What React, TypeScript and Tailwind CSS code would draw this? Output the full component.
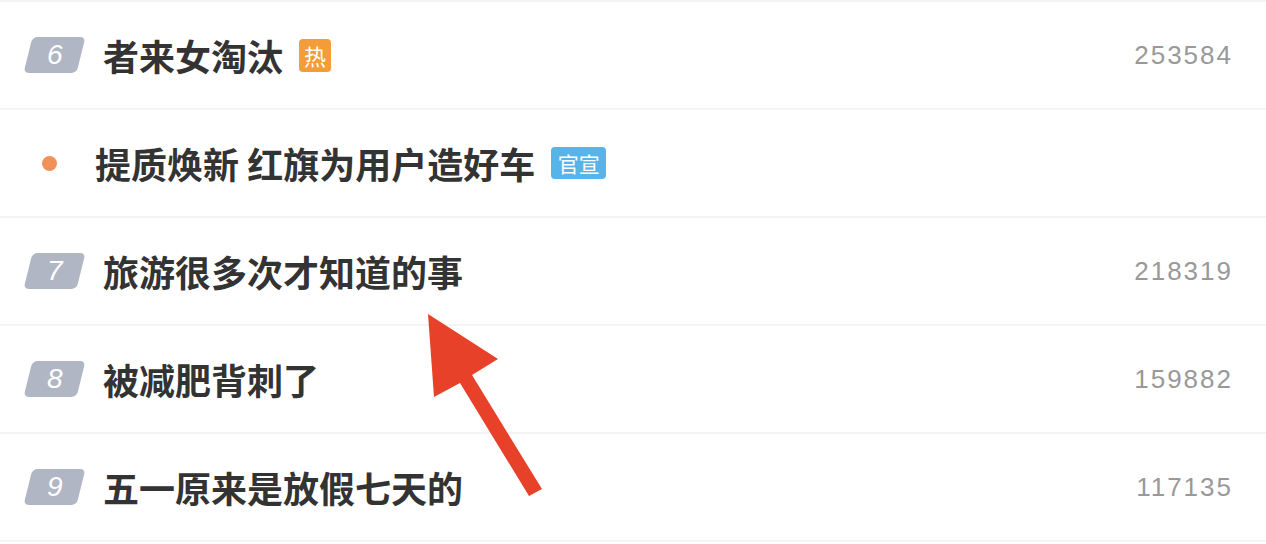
const items = [
    { rank: "6", title: "者来女淘汰", tag: "热", count: "253584" },
    { rank: "", title: "提质焕新 红旗为用户造好车", tag: "官宣", count: "" },
    { rank: "7", title: "旅游很多次才知道的事", tag: "", count: "218319" },
    { rank: "8", title: "被减肥背刺了", tag: "", count: "159882" },
    { rank: "9", title: "五一原来是放假七天的", tag: "", count: "117135" },
];

const cjk = { fontFamily: '"Noto Sans CJK SC", "Noto Sans", sans-serif' };

export default function App() {
    return (
        <div className="relative w-[1266px] h-[544px] bg-white overflow-hidden">
            <div className="border-t-2 border-[#f4f4f4]">
                {items.map((item) => (
                    <div
                        key={item.title}
                        className="flex items-center h-[108px] border-b-2 border-[#f4f4f4] pr-[33px]"
                    >
                        {item.rank ? (
                            <div className="flex items-center pl-[28px] pr-[22px]">
                                <div className="w-[53px] h-[36px] -skew-x-[14deg] rounded-[5px] bg-[#b1b6c5] flex items-center justify-center">
                                    <span
                                        className="text-white text-[28px] italic skew-x-[14deg] leading-none"
                                        style={{ fontFamily: '"Liberation Sans", Arial, sans-serif' }}
                                    >
                                        {item.rank}
                                    </span>
                                </div>
                            </div>
                        ) : (
                            <div className="flex items-center pl-[42px] pr-[38px]">
                                <div className="w-[15px] h-[15px] rounded-full bg-[#f0915a]" />
                            </div>
                        )}
                        <div className="flex items-center gap-[16px] flex-1 min-w-0" style={cjk}>
                            <span className="text-[36px] font-semibold text-[#333333] leading-none">
                                {item.title}
                            </span>
                            {item.tag === "热" && (
                                <span className="w-[32px] h-[33px] rounded-[4px] bg-[#f39c38] text-white text-[22px] leading-none flex items-center justify-center">
                                    热
                                </span>
                            )}
                            {item.tag === "官宣" && (
                                <span className="w-[55px] h-[32px] rounded-[4px] bg-[#57b4ea] text-white text-[21px] leading-none flex items-center justify-center">
                                    官宣
                                </span>
                            )}
                        </div>
                        {item.count && (
                            <span
                                className="text-[26px] tracking-[2px] text-[#999999]"
                                style={{ fontFamily: '"Liberation Sans", Arial, sans-serif' }}
                            >
                                {item.count}
                            </span>
                        )}
                    </div>
                ))}
            </div>
            <svg
                className="absolute left-0 top-0 pointer-events-none"
                width="1266"
                height="544"
                viewBox="0 0 1266 544"
            >
                <polygon
                    points="428,314 498,359 472,375 542,489 529,496 460,383 434,397"
                    fill="#e8412a"
                />
            </svg>
        </div>
    );
}
